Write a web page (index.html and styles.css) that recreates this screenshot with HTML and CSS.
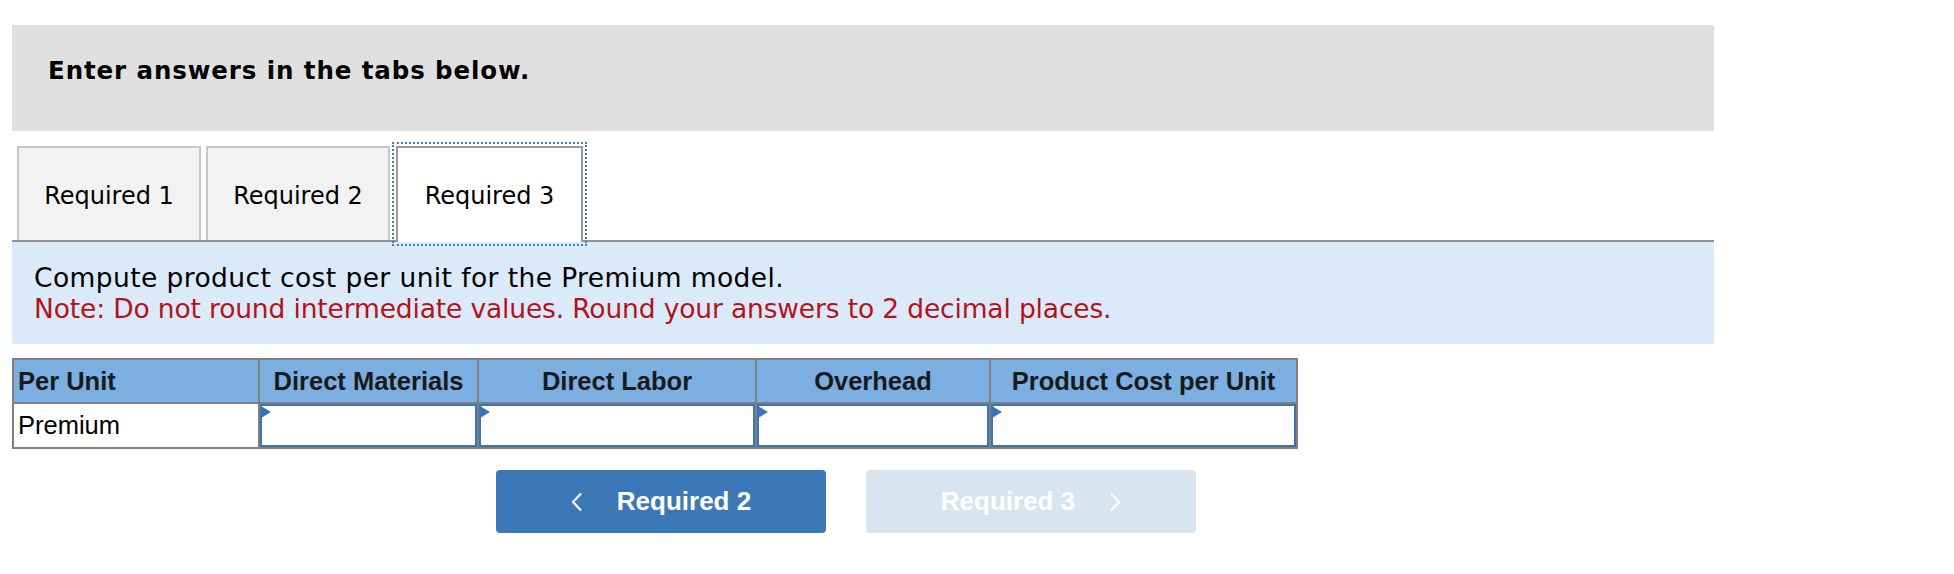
FILE: index.html
```html
<!DOCTYPE html>
<html lang="en">
<head>
    <meta charset="UTF-8">
    <meta name="viewport" content="width=device-width, initial-scale=1.0">
    <title>Required 3</title>
    <link rel="stylesheet" href="styles.css">
</head>
<body>
    <div class="wrapper">
        <div class="prompt">Enter answers in the tabs below.</div>

        <div class="tabs">
            <button class="tab">Required 1</button>
            <button class="tab">Required 2</button>
            <button class="tab active">Required 3</button>
        </div>

        <div class="question">
            <p class="ask">Compute product cost per unit for the Premium model.</p>
            <p class="note">Note: Do not round intermediate values. Round your answers to 2 decimal places.</p>
        </div>

        <table class="answers">
            <tr>
                <th class="left col-unit">Per Unit</th>
                <th class="col-dm">Direct Materials</th>
                <th class="col-dl">Direct Labor</th>
                <th class="col-oh">Overhead</th>
                <th class="col-total">Product Cost per Unit</th>
            </tr>
            <tr>
                <td class="label">Premium</td>
                <td><div class="field"><span class="flag"></span><input type="text"></div></td>
                <td><div class="field"><span class="flag"></span><input type="text"></div></td>
                <td><div class="field"><span class="flag"></span><input type="text"></div></td>
                <td><div class="field"><span class="flag"></span><input type="text"></div></td>
            </tr>
        </table>

        <div class="nav">
            <button class="nav-btn prev">
                <svg width="12" height="20" viewBox="0 0 12 20"><polyline points="10,1.5 2,10 10,18.5" fill="none" stroke="#fff" stroke-width="2.2"/></svg>
                <span>Required 2</span>
            </button>
            <button class="nav-btn next" disabled>
                <span>Required 3</span>
                <svg width="12" height="20" viewBox="0 0 12 20"><polyline points="2,1.5 10,10 2,18.5" fill="none" stroke="#fff" stroke-width="2.2"/></svg>
            </button>
        </div>
    </div>
</body>
</html>
```

FILE: styles.css
```css
* {
    margin: 0;
    padding: 0;
    box-sizing: border-box;
}
body {
    background: #fff;
    font-family: "DejaVu Sans", Verdana, sans-serif;
    color: #000;
}
.wrapper {
    width: 1714px;
    padding: 25px 0 0 12px;
}
.prompt {
    background-color: #e0e0e0;
    height: 106px;
    padding: 31px 36px 0;
    font-size: 24.5px;
    line-height: 30px;
    font-weight: bold;
    letter-spacing: 0.9px;
}

/* tabs */
.tabs {
    display: flex;
    gap: 5px;
    margin-top: 15px;
    padding-left: 5px;
    border-bottom: 2px solid #929292;
}
.tab {
    font-family: "DejaVu Sans", Verdana, sans-serif;
    font-size: 24px;
    color: #000;
    width: 184px;
    height: 94px;
    line-height: 88px;
    padding: 4px 0 0;
    text-align: center;
    background: #f2f2f2;
    border: 2px solid #c8c8c8;
    border-bottom: none;
    cursor: pointer;
}
.tab.active {
    width: 187px;
    background: #fff;
    border-color: #999;
    margin-left: 1px;
    margin-bottom: -2px;
    height: 96px;
    padding-bottom: 2px;
    outline: 2px dotted #3f7fca;
    outline-offset: 2px;
}

/* question text */
.question {
    background-color: #dbeaf8;
    padding: 20px 22px 20px;
    font-size: 26.5px;
    line-height: 31px;
}
.question .ask {
    letter-spacing: 0.4px;
}
.question .note {
    color: #b5121b;
    letter-spacing: -0.15px;
}

/* answer table */
.answers {
    margin-top: 14px;
    border-collapse: collapse;
    font-family: "Liberation Sans", Arial, sans-serif;
    font-size: 25.5px;
}
.answers th, .answers td {
    border: 2px solid #7f7f7f;
    padding: 0;
}
.answers th {
    background-color: #7baee1;
    height: 44px;
    padding: 0 4px;
    color: #1a1a1a;
    text-align: center;
}
.answers th.left {
    text-align: left;
}
.answers td {
    height: 45px;
}
.answers td.label {
    padding: 0 4px;
}
.col-unit { width: 246px; }
.col-dm { width: 219px; }
.col-dl { width: 278px; }
.col-oh { width: 234px; }
.col-total { width: 307px; }

.field {
    position: relative;
    height: 43px;
}
.field input {
    width: 100%;
    height: 100%;
    border: 2px solid #3a74b4;
    outline: none;
    font-size: 22px;
}
.flag {
    position: absolute;
    left: 1px;
    top: 2px;
    border-left: 10px solid #3a74b4;
    border-top: 6.5px solid transparent;
    border-bottom: 6.5px solid transparent;
}

/* prev / next */
.nav {
    display: flex;
    gap: 40px;
    margin-top: 21px;
    padding-left: 484px;
}
.nav-btn {
    width: 330px;
    height: 63px;
    border: none;
    border-radius: 4px;
    display: flex;
    align-items: center;
    justify-content: center;
    gap: 34px;
    font-family: "Liberation Sans", Arial, sans-serif;
    font-size: 26px;
    font-weight: bold;
    color: #fff;
    cursor: pointer;
}
.nav-btn.prev {
    background-color: #3c78b8;
}
.nav-btn.next {
    background-color: #d9e4f1;
    cursor: default;
}
```
